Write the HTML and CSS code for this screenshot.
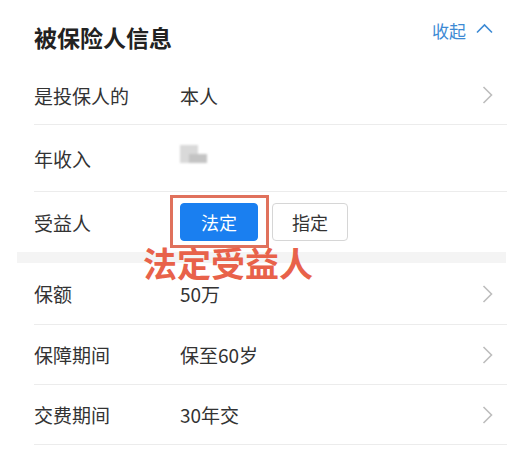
FILE: index.html
```html
<!DOCTYPE html>
<html lang="zh-CN">
<head>
<meta charset="utf-8">
<link rel="stylesheet" href="styles.css">
</head>
<body>
<div class="page">
  <div class="header">
    <div class="title">被保险人信息</div>
    <div class="collapse">收起
      <svg class="up" width="17" height="11" viewBox="0 0 17 11"><polyline points="1,9.5 8.5,2 16,9.5" fill="none" stroke="#3d8ad4" stroke-width="1.6"/></svg>
    </div>
  </div>

  <div class="row r1">
    <div class="label">是投保人的</div>
    <div class="value">本人</div>
    <svg class="chev" width="11" height="18" viewBox="0 0 11 18"><polyline points="1.5,1 9.5,9 1.5,17" fill="none" stroke="#bdbdbd" stroke-width="1.6"/></svg>
  </div>

  <div class="row r2">
    <div class="label">年收入</div>
    <div class="value"><div class="blur"><span class="b1"></span><span class="b2"></span></div></div>
  </div>

  <div class="row r3">
    <div class="label">受益人</div>
    <div class="value btns">
      <div class="btn active">法定</div>
      <div class="btn">指定</div>
      <div class="markbox"></div>
    </div>
  </div>

  <div class="band">
    <div class="marktext">法定受益人</div>
  </div>

  <div class="row r4">
    <div class="label">保额</div>
    <div class="value">50万</div>
    <svg class="chev" width="11" height="18" viewBox="0 0 11 18"><polyline points="1.5,1 9.5,9 1.5,17" fill="none" stroke="#bdbdbd" stroke-width="1.6"/></svg>
  </div>

  <div class="row">
    <div class="label">保障期间</div>
    <div class="value">保至60岁</div>
    <svg class="chev" width="11" height="18" viewBox="0 0 11 18"><polyline points="1.5,1 9.5,9 1.5,17" fill="none" stroke="#bdbdbd" stroke-width="1.6"/></svg>
  </div>

  <div class="row">
    <div class="label">交费期间</div>
    <div class="value">30年交</div>
    <svg class="chev" width="11" height="18" viewBox="0 0 11 18"><polyline points="1.5,1 9.5,9 1.5,17" fill="none" stroke="#bdbdbd" stroke-width="1.6"/></svg>
  </div>
</div>
</body>
</html>
```

FILE: styles.css
```css
html, body {
  margin: 0;
  padding: 0;
  background: #ffffff;
}
body {
  font-family: "Noto Sans CJK SC", "Noto Sans", sans-serif;
  color: #333333;
  width: 523px;
  height: 456px;
  overflow: hidden;
}
.page {
  position: relative;
}
.header {
  display: flex;
  align-items: center;
  justify-content: space-between;
  height: 66px;
  padding: 0 30px 0 34px;
  box-sizing: border-box;
}
.title {
  font-size: 23px;
  font-weight: 700;
  color: #222222;
  line-height: 1;
  margin-top: 8px;
}
.collapse {
  display: flex;
  align-items: center;
  gap: 10px;
  font-size: 17px;
  color: #3d8ad4;
  line-height: 1;
  margin-top: -6px;
}
.up {
  margin-top: -4px;
}
.row {
  display: flex;
  align-items: center;
  height: 59px;
  margin-left: 34px;
  margin-right: 16px;
  border-bottom: 1px solid #ececec;
  position: relative;
}
.row.r1 { height: 58px; }
.row.r2 { height: 66px; }
.row.r3 {
  border-bottom: none;
  height: 60px;
}
.row.r4 { height: 61px; }
.label {
  width: 146px;
  font-size: 19px;
  line-height: 1;
  color: #333333;
}
.value {
  flex: 1;
  font-size: 19px;
  line-height: 1;
  color: #333333;
}
.chev {
  margin-right: 14px;
}
.blur {
  position: relative;
  width: 30px;
  height: 20px;
  filter: blur(1.2px);
  margin-top: -6px;
}
.blur .b1 {
  position: absolute;
  left: 0;
  top: 0;
  width: 18px;
  height: 18px;
  background: #d9d9d9;
}
.blur .b2 {
  position: absolute;
  left: 9px;
  top: 9px;
  width: 18px;
  height: 9px;
  background: #c4c4c4;
}
.btns {
  display: flex;
  gap: 14px;
  position: relative;
}
.btn {
  width: 76px;
  height: 38px;
  box-sizing: border-box;
  border: 1px solid #d6d6d6;
  border-radius: 4px;
  display: flex;
  align-items: center;
  justify-content: center;
  font-size: 18px;
  color: #333333;
  background: #ffffff;
}
.btn.active {
  width: 78px;
  background: #1a7ff0;
  border-color: #1a7ff0;
  color: #ffffff;
}
.markbox {
  position: absolute;
  left: -10px;
  top: -8px;
  width: 99px;
  height: 53px;
  box-sizing: border-box;
  border: 3px solid #e0715c;
}
.band {
  position: relative;
  height: 11px;
  margin: 0 17px;
  background: #f4f4f4;
}
.marktext {
  position: absolute;
  left: 126px;
  top: -6px;
  font-size: 34px;
  font-weight: 700;
  color: #e8624a;
  line-height: 1;
  white-space: nowrap;
}
```
